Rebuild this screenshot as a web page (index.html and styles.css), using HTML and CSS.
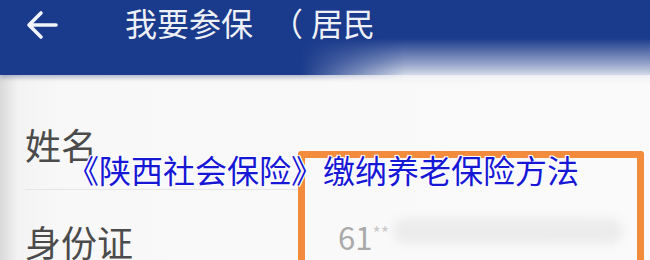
FILE: index.html
```html
<!DOCTYPE html>
<html lang="zh">
<head>
<meta charset="utf-8">
<link rel="stylesheet" href="styles.css">
</head>
<body>
<div class="page">
  <header class="header">
    <svg class="back" width="34" height="32" viewBox="0 0 34 32">
      <path d="M4 16 H31 M16 4 L4 16 L16 28" fill="none" stroke="#f2f4fb" stroke-width="3.6" stroke-linecap="round" stroke-linejoin="round"/>
    </svg>
    <h1 class="title">我要参保<span class="paren">（</span>居民</h1>
    <div class="fade"></div>
  </header>
  <main class="form">
    <div class="row row-name">
      <span class="label">姓名</span>
    </div>
    <div class="row row-id">
      <span class="label">身份证</span>
      <span class="value">61<span class="mask">**</span></span>
      <span class="blur"></span>
    </div>
  </main>
  <div class="highlight"></div>
  <div class="caption">《陕西社会保险》缴纳养老保险方法</div>
</div>
</body>
</html>
```
FILE: styles.css
```css
html, body {
  margin: 0;
  padding: 0;
}
body {
  width: 650px;
  height: 260px;
  overflow: hidden;
  background: #f7f7f7;
  font-family: "Noto Sans CJK SC", "Noto Sans", sans-serif;
}
.page {
  position: relative;
  width: 650px;
  height: 260px;
  overflow: hidden;
  background: linear-gradient(90deg, #d9d9d9 0px, #f3f3f3 18px, #f8f8f8 60px, #fafafa 100%);
}
.header {
  position: relative;
  height: 75px;
  display: flex;
  align-items: flex-start;
  padding: 0 0 0 25px;
  box-sizing: border-box;
  background: #1a3a8b;
  box-shadow: 0 3px 4px rgba(120, 130, 170, 0.5);
}
.back {
  margin-top: 9px;
  flex: none;
}
.title {
  margin: 5px 0 0 66px;
  font-size: 32px;
  font-weight: 400;
  line-height: 34px;
  color: #eef0f8;
  white-space: nowrap;
}
.paren {
  margin-left: 18px;
  margin-right: 8px;
}
.fade {
  position: absolute;
  left: 300px;
  right: 0;
  top: 38px;
  bottom: -6px;
  background: linear-gradient(180deg, rgba(247,247,250,0) 0%, rgba(230,233,242,0.6) 60%, #f6f6f8 100%);
  -webkit-mask-image: linear-gradient(90deg, transparent 0%, #000 30%);
  mask-image: linear-gradient(90deg, transparent 0%, #000 30%);
}
.form {
  display: flex;
  flex-direction: column;
  padding: 0 0 0 25px;
}
.row {
  display: flex;
  align-items: flex-start;
}
.row-name {
  height: 115px;
  padding-top: 46px;
  box-sizing: border-box;
  border-bottom: 1px solid #e6e6e6;
  width: 275px;
}
.row-id {
  height: 70px;
  padding-top: 28px;
  box-sizing: border-box;
}
.label {
  font-size: 36px;
  line-height: 46px;
  color: #4b4b4b;
  width: 313px;
  flex: none;
}
.value {
  font-size: 31px;
  color: #a9a9a9;
  line-height: 40px;
  margin-top: -6px;
}
.mask {
  font-size: 18px;
  vertical-align: 10px;
  color: #c8c8c8;
}
.blur {
  width: 230px;
  height: 26px;
  margin-top: 0;
  margin-left: 4px;
  border-radius: 13px;
  background: #ececec;
  filter: blur(4px);
}
.highlight {
  position: absolute;
  left: 298px;
  top: 151px;
  width: 346px;
  height: 140px;
  box-sizing: border-box;
  border: 7px solid #f28b3b;
  border-radius: 3px;
}
.caption {
  position: absolute;
  left: 67px;
  top: 146px;
  font-size: 32px;
  line-height: 46px;
  color: #1717d6;
  white-space: nowrap;
  text-shadow: 1px 1px 0 #fff, -1px -1px 0 #fff, 1px -1px 0 #fff, -1px 1px 0 #fff, 0 0 2px #fff;
}
```
